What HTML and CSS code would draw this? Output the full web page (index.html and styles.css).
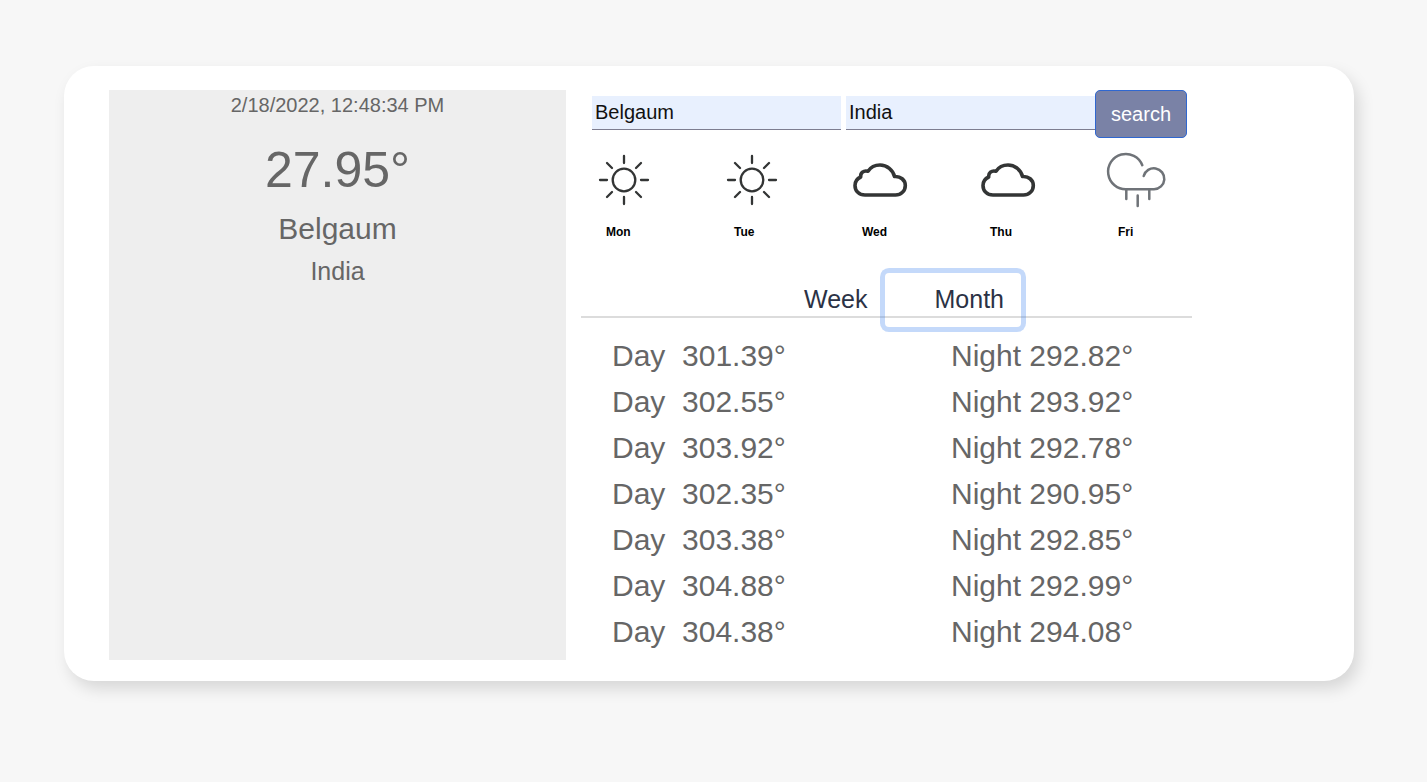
FILE: index.html
```html
<!DOCTYPE html>
<html lang="en">
<head>
<meta charset="utf-8">
<meta name="viewport" content="width=device-width, initial-scale=1">
<title>Weather</title>
<link rel="stylesheet" href="styles.css">
</head>
<body>
<svg class="sprite" aria-hidden="true">
  <symbol id="sun" viewBox="0 0 64 64">
    <g fill="none" stroke="#333535" stroke-width="2.3" stroke-linecap="round">
      <circle cx="32" cy="32" r="11.3"/>
      <path d="M32 8v7M32 49v7M8 32h7M49 32h7M15 15l5 5M44 44l5 5M49 15l-5 5M20 44l-5 5"/>
    </g>
  </symbol>
  <symbol id="cloud" viewBox="0 0 64 64">
    <path fill="none" stroke="#333535" stroke-width="3.6" stroke-linejoin="round" d="M17 47C11 47 7 43 7 37.500C7 33.500 9.500 30.500 12.700 29C12.200 25 15.500 22 20 23.300C22.500 19.500 26.500 17 32 17C39 17 45 22 46.500 28.500C52.500 28 57.300 32 57.300 37.500C57.300 43 53 47 47.500 47Z"/>
  </symbol>
  <symbol id="rain" viewBox="0 0 64 64">
    <g fill="none" stroke="#6f7378" stroke-width="2.5" stroke-linecap="round">
      <path d="M38.300 17.200A17.700 17.700 0 1 0 22.500 41.300H50A10.500 10.500 0 1 0 39.700 28"/>
      <path d="M22.300 42v9M33.700 47.500v10.500M45.300 42v9"/>
    </g>
  </symbol>
</svg>
<main class="card">
  <section class="current">
    <p class="current-date">2/18/2022, 12:48:34 PM</p>
    <p class="current-temp">27.95°</p>
    <h1 class="current-city">Belgaum</h1>
    <p class="current-country">India</p>
  </section>
  <section class="details">
    <form class="search">
      <input class="search-input" type="text" aria-label="City" value="Belgaum">
      <input class="search-input" type="text" aria-label="Country" value="India">
      <button class="search-button" type="button">search</button>
    </form>
    <ul class="forecast">
      <li><svg class="icon"><use href="#sun"/></svg><span class="day">Mon</span></li>
      <li><svg class="icon"><use href="#sun"/></svg><span class="day">Tue</span></li>
      <li><svg class="icon"><use href="#cloud"/></svg><span class="day">Wed</span></li>
      <li><svg class="icon"><use href="#cloud"/></svg><span class="day">Thu</span></li>
      <li><svg class="icon"><use href="#rain"/></svg><span class="day">Fri</span></li>
    </ul>
    <nav class="tabs">
      <button class="tab" type="button">Week</button>
      <button class="tab tab-active" type="button">Month</button>
    </nav>
    <table class="temps">
      <tbody>
        <tr><td>Day&nbsp; 301.39°</td><td>Night 292.82°</td></tr>
        <tr><td>Day&nbsp; 302.55°</td><td>Night 293.92°</td></tr>
        <tr><td>Day&nbsp; 303.92°</td><td>Night 292.78°</td></tr>
        <tr><td>Day&nbsp; 302.35°</td><td>Night 290.95°</td></tr>
        <tr><td>Day&nbsp; 303.38°</td><td>Night 292.85°</td></tr>
        <tr><td>Day&nbsp; 304.88°</td><td>Night 292.99°</td></tr>
        <tr><td>Day&nbsp; 304.38°</td><td>Night 294.08°</td></tr>
      </tbody>
    </table>
  </section>
</main>
</body>
</html>
```
FILE: styles.css
```css
* {
  box-sizing: border-box;
}

body {
  margin: 0;
  padding: 66px 73px 66px 64px;
  background: #f7f7f7;
  color: #666;
  font-family: "Liberation Sans", Arial, sans-serif;
}

p, h1, ul {
  margin: 0;
  padding: 0;
  font-weight: 400;
}

button, input {
  font-family: inherit;
}

.sprite {
  display: none;
}

.card {
  display: grid;
  grid-template-columns: 457fr 611fr 147fr;
  column-gap: 15px;
  padding: 24px 0 21px 45px;
  background: #fff;
  border-radius: 30px;
  box-shadow: 5px 8px 16px rgba(0, 0, 0, 0.13);
}

.current {
  background: #eee;
  text-align: center;
}

.current-date {
  margin-bottom: 12px;
  font-size: 20px;
  line-height: 30px;
}

.current-temp {
  font-size: 50px;
  line-height: 76px;
}

.current-city {
  font-size: 30px;
  line-height: 42px;
}

.current-country {
  font-size: 25px;
  line-height: 42px;
}

.details {
  min-width: 0;
  padding-bottom: 5px;
}

.search {
  display: flex;
  padding: 0 5px 0 11px;
}

.search-input {
  flex: 1;
  min-width: 0;
  height: 34px;
  margin-top: 6px;
  padding: 0 3px;
  border: 0;
  border-bottom: 1px solid #7d7d90;
  border-radius: 0;
  background: #e8f0fe;
  color: #111;
  font-size: 20px;
}

.search-input + .search-input {
  margin-left: 5px;
}

.search-button {
  height: 48px;
  padding: 0 15px;
  border: 1px solid #2f67d0;
  border-radius: 5px;
  background: #7a82a6;
  color: #fff;
  font-size: 20px;
}

.forecast {
  display: flex;
  justify-content: space-between;
  margin: 10px 0 31px;
  padding: 0 24px 0 11px;
  list-style: none;
}

.icon {
  display: block;
  width: 64px;
  height: 64px;
}

.day {
  display: block;
  margin-top: 10px;
  padding-left: 14px;
  color: #000;
  font-size: 12px;
  font-weight: 700;
  line-height: 20px;
}

.tabs {
  display: flex;
  justify-content: flex-end;
  height: 45px;
  padding-right: 171px;
  border-bottom: 2px solid #dcdcdc;
}

.tab {
  height: 54px;
  padding: 0 17px 2px 50px;
  border: 0;
  border-radius: 4px;
  background: none;
  color: #2b3245;
  font-size: 25px;
}

.tab-active {
  box-shadow: 0 0 0 5px rgba(60, 130, 240, 0.3);
}

.temps {
  width: 100%;
  margin-top: 15px;
  border-collapse: collapse;
  font-size: 30px;
  line-height: 46px;
}

.temps td {
  padding: 0 0 0 31px;
  white-space: nowrap;
}

.temps td:first-child {
  width: 339px;
}
```
